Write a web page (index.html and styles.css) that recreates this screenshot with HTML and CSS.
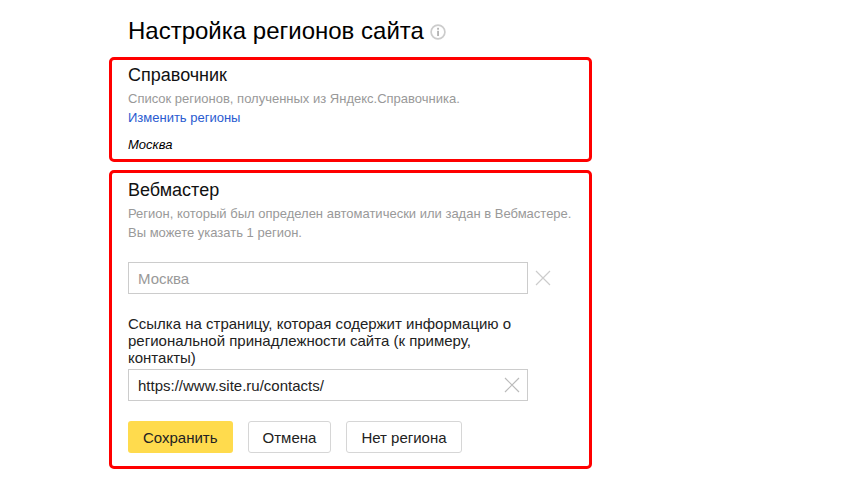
FILE: index.html
```html
<!DOCTYPE html>
<html lang="ru">
<head>
<meta charset="utf-8">
<title>Настройка регионов сайта</title>
<link rel="stylesheet" href="styles.css">
</head>
<body>
<main class="page">
  <h1 class="title">Настройка регионов сайта
    <svg class="info" width="16" height="16" viewBox="0 0 16 16" aria-hidden="true"><circle cx="8" cy="8" r="6.9" fill="none" stroke="#ccc" stroke-width="1.7"/><rect x="7.1" y="3.8" width="1.9" height="1.9" fill="#b5b5b5"/><rect x="7.1" y="6.8" width="1.9" height="5.2" fill="#b5b5b5"/></svg>
  </h1>
  <section class="box box-directory">
    <h2 class="box-title">Справочник</h2>
    <p class="hint">Список регионов, полученных из Яндекс.Справочника.</p>
    <a class="link" href="#">Изменить регионы</a>
    <p class="region">Москва</p>
  </section>
  <section class="box box-webmaster">
    <h2 class="box-title">Вебмастер</h2>
    <p class="hint hint-webmaster">Регион, который был определен автоматически или задан в Вебмастере.<br>Вы можете указать 1 регион.</p>
    <div class="field-row">
      <div class="input input-disabled">Москва</div>
      <svg class="cross" width="16" height="16" viewBox="0 0 16 16" aria-hidden="true"><path d="M1 1L15 15M15 1L1 15" stroke="#ccc" stroke-width="1.2" fill="none"/></svg>
    </div>
    <label class="label">Ссылка на страницу, которая содержит информацию о региональной принадлежности сайта (к примеру, контакты)</label>
    <div class="input">https://www.site.ru/contacts/
      <svg class="cross cross-inside" width="16" height="16" viewBox="0 0 16 16" aria-hidden="true"><path d="M1 1L15 15M15 1L1 15" stroke="#bbb" stroke-width="1.2" fill="none"/></svg>
    </div>
    <div class="actions">
      <button class="btn btn-primary">Сохранить</button>
      <button class="btn">Отмена</button>
      <button class="btn">Нет региона</button>
    </div>
  </section>
</main>
</body>
</html>
```
FILE: styles.css
```css
* { box-sizing: border-box; }
html, body { margin: 0; background: #fff; }
body { font-family: "Liberation Sans", Arial, sans-serif; color: #000; height: 494px; overflow: hidden; }
.page { width: 483px; margin-left: 109px; padding-top: 16px; }
.title { display: flex; align-items: center; gap: 6px; margin: 0 0 11px 19px; font-size: 24px; font-weight: 400; line-height: 30px; height: 30px; white-space: nowrap; }
.info { margin-top: 2px; }
.box { border: 3px solid #f00; border-radius: 5px; padding: 3px 16px 0; background: #fff; }
.box-directory { height: 105px; margin-bottom: 8px; }
.box-webmaster { height: 299px; padding-top: 5px; }
.box-title { margin: 0; font-size: 18px; font-weight: 400; line-height: 24px; color: #111; }
.hint { margin: 2px 0 0; font-size: 13px; line-height: 19px; color: #999; }
.link { display: block; font-size: 13px; line-height: 19px; color: #2a5bd0; text-decoration: none; }
.region { margin: 8px 0 0; font-size: 13px; line-height: 19px; font-style: italic; }
.field-row { display: flex; align-items: center; gap: 7px; margin-top: 20px; }
.input { position: relative; display: flex; align-items: center; width: 400px; height: 32px; padding: 0 9px; border: 1px solid #ccc; font-size: 15px; color: #222; }
.input-disabled { color: #999; }
.label { display: block; width: 400px; margin: 21px 0 3px; font-size: 15px; line-height: 17px; color: #222; }
.cross-inside { position: absolute; right: 7px; top: 7px; }
.actions { display: flex; gap: 15px; margin-top: 20px; }
.btn { height: 32px; padding: 0 14px; border: 1px solid #d6d6d6; border-radius: 3px; background: #fff; font: 15px "Liberation Sans", Arial, sans-serif; color: #222; }
.btn-primary { padding: 0 15px; border: 0; background: #ffdb4d; }
```
